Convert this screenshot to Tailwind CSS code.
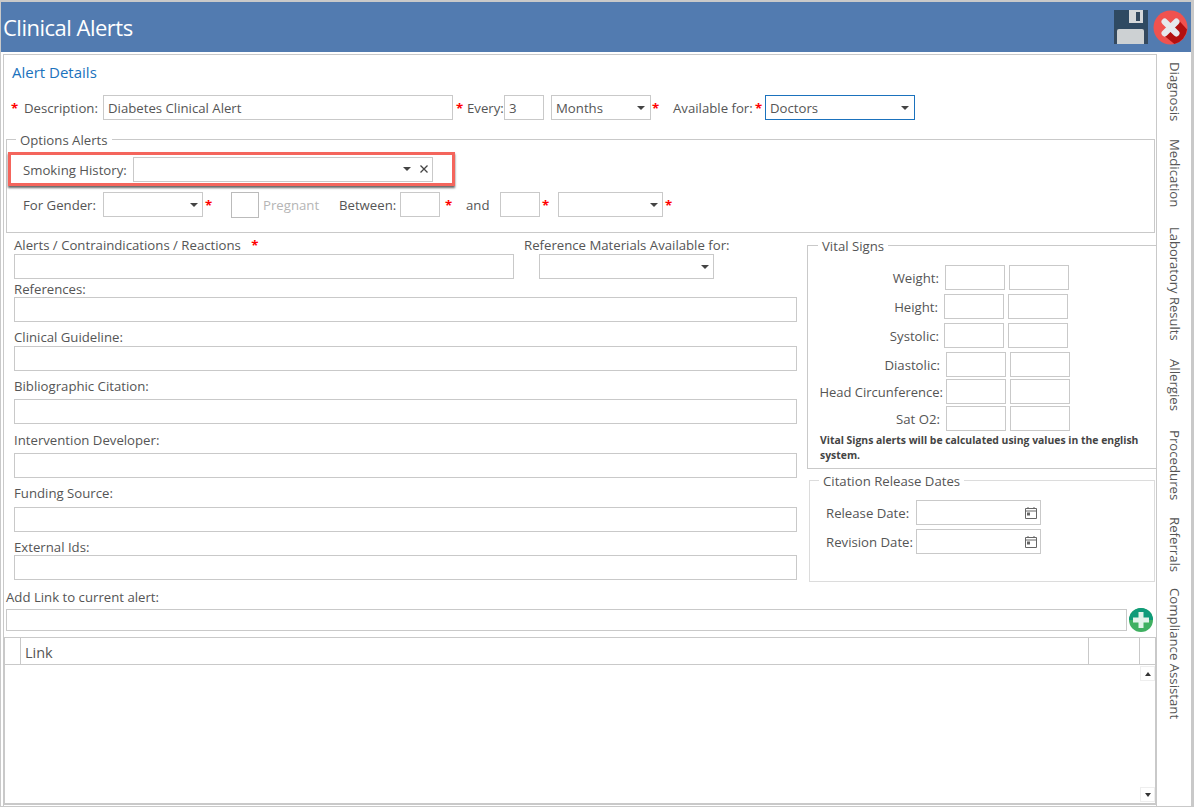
<!DOCTYPE html>
<html><head><meta charset="utf-8">
<script src="https://cdn.jsdelivr.net/npm/@tailwindcss/browser@4"></script>
</head>
<body class="bg-white">
<div class="w-[1194px] h-[807px] overflow-hidden flex flex-col bg-white border-t-2 border-r-[3px] border-l border-b border-[#c9c9c9] font-['Open_Sans',sans-serif] text-[13.2px] text-[#555]">
  <header class="h-[50px] shrink-0 bg-[#527bb0] flex items-center pl-[2px] pr-[3px]">
    <h1 class="text-[22px] text-white flex-1 tracking-[-0.5px]">Clinical Alerts</h1>
    <svg class="w-[34px] h-[34px]" viewBox="0 0 34 34"><rect width="34" height="34" fill="#34495e"/><rect width="34" height="19" fill="#2f4a62"/><rect x="15" y="0" width="14" height="13" fill="#d5d8da"/><rect x="22" y="2" width="4" height="9" fill="#34495e"/><path d="M3 21q0-2 2-2h23q2 0 2 2v13H3z" fill="#cdd1d3"/></svg>
    <svg class="w-[35px] h-[35px] ml-[5px]" viewBox="0 0 36 36"><circle cx="18" cy="18" r="17.500" fill="#f0524f"/><path d="M11 26 L26 10 L35 20 A17.500 17.500 0 0 1 22 35z" fill="#b3100f"/><path d="M12 12L24 24M24 12L12 24" stroke="#e6e9ed" stroke-width="6.500" stroke-linecap="round"/></svg>
  </header>
  <div class="flex flex-1 min-h-0 pt-[2px] pl-[2px]">
    <main class="w-[1154px] h-[753px] shrink-0 border border-[#c9c9c9]">
      <h2 class="text-[15px] text-[#1b72bd] leading-[20px] ml-[8px] mt-[7px]">Alert Details</h2>
      <!-- description row -->
      <div class="flex items-center h-[25px] mt-[13px] ml-[7px]">
        <span class="text-[#f00] w-[13px] font-bold pt-[2px]">*</span>
        <span class="w-[79px] pt-[2px]">Description:</span>
        <div class="w-[350px] h-[25px] border border-[#c9c9c9] px-[4px] leading-[25px]">Diabetes Clinical Alert</div>
        <span class="text-[#f00] font-bold ml-[3px] w-[11px] pt-[2px]">*</span>
        <span class="w-[37px] pt-[2px]">Every:</span>
        <div class="w-[40px] h-[25px] border border-[#c9c9c9] px-[4px] leading-[25px]">3</div>
        <div class="w-[100px] h-[25px] border border-[#c9c9c9] px-[4px] ml-[7px] flex justify-between items-center"><span class="pt-[2px]">Months</span><span class="w-0 h-0 border-x-4 border-x-transparent border-t-4 border-t-[#444] mr-[1px]"></span></div>
        <span class="text-[#f00] font-bold w-[22px] pl-[1px] pt-[2px]">*</span>
        <span class="w-[82px] pt-[2px]">Available for:</span>
        <span class="text-[#f00] font-bold w-[10px] pt-[2px]">*</span>
        <div class="w-[150px] h-[25px] border border-[#1b72bd] px-[4px] flex justify-between items-center"><span class="pt-[2px]">Doctors</span><span class="w-0 h-0 border-x-4 border-x-transparent border-t-4 border-t-[#444] mr-[1px]"></span></div>
      </div>
      <!-- options -->
      <section class="relative h-[94px] mt-[19px] ml-[2px] mr-[1px] border border-[#c9c9c9]">
        <span class="absolute -top-[9px] left-[9px] bg-white px-[4px] leading-[18px]">Options Alerts</span>
        <div class="mt-[12px] ml-[1px] w-[447px] h-[34px] border-[3px] border-[#f4655c] shadow-[0_2px_2px_#666] flex items-center pl-[12px]">
          <span class="w-[110px] pt-[4px]">Smoking History:</span>
          <div class="w-[300px] h-[25px] border border-[#c9c9c9] flex items-center justify-end pr-[4px] gap-[9px]"><span class="w-0 h-0 border-x-4 border-x-transparent border-t-4 border-t-[#444]"></span><svg class="w-[8px] h-[8px]" viewBox="0 0 8 8"><path d="M.5.5l7 7M7.500.5l-7 7" stroke="#444" stroke-width="1.300"/></svg></div>
        </div>
        <div class="flex items-center h-[25px] mt-[6px] ml-[16px]">
          <span class="w-[80px] pt-[2px]">For Gender:</span>
          <div class="w-[100px] h-[25px] border border-[#c9c9c9] flex items-center justify-end pr-[4px]"><span class="w-0 h-0 border-x-4 border-x-transparent border-t-4 border-t-[#444]"></span></div>
          <span class="text-[#f00] font-bold ml-[2px] w-[26px] pt-[2px]">*</span>
          <div class="w-[28px] h-[26px] border border-[#bbb]"></div>
          <span class="text-[#b5b5b5] ml-[4px] w-[76px] pt-[2px]">Pregnant</span>
          <span class="w-[61px] pt-[2px]">Between:</span>
          <div class="w-[40px] h-[25px] border border-[#c9c9c9]"></div>
          <span class="text-[#f00] font-bold ml-[5px] w-[21px] pt-[2px]">*</span>
          <span class="w-[34px] pt-[2px]">and</span>
          <div class="w-[40px] h-[25px] border border-[#c9c9c9]"></div>
          <span class="text-[#f00] font-bold ml-[2px] w-[16px] pt-[2px]">*</span>
          <div class="w-[105px] h-[25px] border border-[#c9c9c9] flex items-center justify-end pr-[4px]"><span class="w-0 h-0 border-x-4 border-x-transparent border-t-4 border-t-[#444]"></span></div>
          <span class="text-[#f00] font-bold ml-[2px] pt-[2px]">*</span>
        </div>
      </section>
      <!-- lower -->
      <div class="flex h-[352px] mt-[3px]">
        <div class="w-[803px] pl-[10px] shrink-0">
          <div class="flex items-start h-[44px]">
            <div class="w-[510px]">
              <div class="h-[18px] leading-[18px]">Alerts / Contraindications / Reactions <span class="text-[#f00] font-bold ml-[7px]">*</span></div>
              <div class="w-[500px] h-[25px] border border-[#c9c9c9]"></div>
            </div>
            <div>
              <div class="h-[18px] leading-[18px]">Reference Materials Available for:</div>
              <div class="w-[175px] h-[25px] border border-[#c9c9c9] ml-[15px] flex items-center justify-end pr-[4px]"><span class="w-0 h-0 border-x-4 border-x-transparent border-t-4 border-t-[#444]"></span></div>
            </div>
          </div>
          <div class="leading-[18px] h-[17px]">References:</div>
          <div class="w-[783px] h-[25px] border border-[#c9c9c9]"></div>
          <div class="leading-[18px] h-[18px] mt-[6px]">Clinical Guideline:</div>
          <div class="w-[783px] h-[25px] border border-[#c9c9c9]"></div>
          <div class="leading-[18px] h-[18px] mt-[6px]">Bibliographic Citation:</div>
          <div class="w-[783px] h-[25px] border border-[#c9c9c9] mt-[4px]"></div>
          <div class="leading-[18px] h-[18px] mt-[7px]">Intervention Developer:</div>
          <div class="w-[783px] h-[25px] border border-[#c9c9c9] mt-[4px]"></div>
          <div class="leading-[18px] h-[18px] mt-[6px]">Funding Source:</div>
          <div class="w-[783px] h-[25px] border border-[#c9c9c9] mt-[5px]"></div>
          <div class="leading-[18px] h-[18px] mt-[6px]">External Ids:</div>
          <div class="w-[783px] h-[25px] border border-[#c9c9c9] -mt-[1px]"></div>
        </div>
        <div class="flex-1 min-w-0 pt-[9px]">
          <section class="relative h-[224px] border-l border-b border-t border-[#c9c9c9]">
            <span class="absolute -top-[9px] left-[10px] bg-white px-[4px] leading-[18px]">Vital Signs</span>
            <div class="grid grid-cols-[131px_60px_60px] gap-x-[4px] pt-[19px] items-center justify-start text-right">
              <span class="h-[25px] leading-[27px]">Weight:</span><div class="w-[60px] h-[25px] border border-[#c9c9c9] ml-[2px]"></div><div class="w-[60px] h-[25px] border border-[#c9c9c9] ml-[2px]"></div>
            </div>
            <div class="grid grid-cols-[131px_60px_60px] gap-x-[4px] mt-[4px] items-center justify-start text-right">
              <span class="h-[25px] leading-[27px] mr-[1px]">Height:</span><div class="w-[60px] h-[25px] border border-[#c9c9c9] ml-[1px]"></div><div class="w-[60px] h-[25px] border border-[#c9c9c9] ml-[1px]"></div>
            </div>
            <div class="grid grid-cols-[131px_60px_60px] gap-x-[4px] mt-[4px] items-center justify-start text-right">
              <span class="h-[25px] leading-[27px]">Systolic:</span><div class="w-[60px] h-[25px] border border-[#c9c9c9] ml-[1px]"></div><div class="w-[60px] h-[25px] border border-[#c9c9c9] ml-[1px]"></div>
            </div>
            <div class="grid grid-cols-[131px_60px_60px] gap-x-[4px] mt-[4px] items-center justify-start text-right">
              <span class="h-[25px] leading-[27px] -mr-[1px]">Diastolic:</span><div class="w-[60px] h-[25px] border border-[#c9c9c9] ml-[3px]"></div><div class="w-[60px] h-[25px] border border-[#c9c9c9] ml-[3px]"></div>
            </div>
            <div class="grid grid-cols-[131px_60px_60px] gap-x-[4px] mt-[2px] items-center justify-start text-right">
              <span class="h-[25px] leading-[27px] whitespace-nowrap -mr-[4px] text-[13px]">Head Circunference:</span><div class="w-[60px] h-[25px] border border-[#c9c9c9] ml-[3px]"></div><div class="w-[60px] h-[25px] border border-[#c9c9c9] ml-[3px]"></div>
            </div>
            <div class="grid grid-cols-[131px_60px_60px] gap-x-[4px] mt-[2px] items-center justify-start text-right">
              <span class="h-[25px] leading-[27px] -mr-[1px]">Sat O2:</span><div class="w-[60px] h-[25px] border border-[#c9c9c9] ml-[3px]"></div><div class="w-[60px] h-[25px] border border-[#c9c9c9] ml-[3px]"></div>
            </div>
            <p class="text-[10.4px] font-bold leading-[15px] pl-[12px] pr-[14px] mt-[2px] text-[#444]">Vital Signs alerts will be calculated using values in the english system.</p>
          </section>
          <section class="relative h-[102px] mt-[11px] ml-[2px] mr-[1px] border border-[#dcdcdc]">
            <span class="absolute -top-[9px] left-[9px] bg-white px-[4px] leading-[18px]">Citation Release Dates</span>
            <div class="flex items-center mt-[19px] ml-[16px]">
              <span class="w-[90px] pt-[2px]">Release Date:</span>
              <div class="w-[125px] h-[25px] border border-[#c9c9c9] flex items-center justify-end pr-[2px]"><svg class="w-[14px] h-[14px]" viewBox="0 0 14 14" fill="none" stroke="#666"><path d="M1.500 2.500h11v10h-11zM1.500 5h11M4 1v2M10 1v2"/><rect x="3.500" y="7" width="2" height="2"/></svg></div>
            </div>
            <div class="flex items-center mt-[4px] ml-[16px]">
              <span class="w-[90px] pt-[2px]">Revision Date:</span>
              <div class="w-[125px] h-[25px] border border-[#c9c9c9] flex items-center justify-end pr-[2px]"><svg class="w-[14px] h-[14px]" viewBox="0 0 14 14" fill="none" stroke="#666"><path d="M1.500 2.500h11v10h-11zM1.500 5h11M4 1v2M10 1v2"/><rect x="3.500" y="7" width="2" height="2"/></svg></div>
            </div>
          </section>
        </div>
      </div>
      <div class="ml-[2px] leading-[18px] h-[18px]">Add Link to current alert:</div>
      <div class="flex items-center ml-[2px] mt-[3px] h-[22px]">
        <div class="w-[1121px] h-[22px] border border-[#c9c9c9] shrink-0"></div>
        <svg class="w-[24px] h-[24px] ml-[2px] shrink-0" viewBox="0 0 24 24"><circle cx="12" cy="12" r="12" fill="#3fb061"/><path d="M0 12a12 12 0 0 1 24 0z" fill="#0f9b7a"/><path d="M9.500 4h5v5.500H20v5h-5.500V20h-5v-5.500H4v-5h5.500z" fill="#e3f3ea"/></svg>
      </div>
      <div class="h-[168px] mt-[6px] border-x border-t border-b-2 border-[#c9c9c9] flex flex-col">
        <div class="flex h-[27px] border-b border-[#c9c9c9] shrink-0">
          <div class="w-[16px] border-r border-[#c9c9c9]"></div>
          <div class="flex-1 border-r border-[#c9c9c9] pl-[4px] text-[14.5px] leading-[29px]">Link</div>
          <div class="w-[51px] border-r border-[#c9c9c9]"></div>
          <div class="w-[15px]"></div>
        </div>
        <div class="flex-1 flex flex-col justify-between items-end py-[1px]">
          <div class="w-[15px] h-[15px] border border-[#eee] flex items-center justify-center"><span class="w-0 h-0 border-x-[3px] border-x-transparent border-b-[4px] border-b-[#333]"></span></div>
          <div class="w-[15px] h-[15px] border border-[#eee] flex items-center justify-center"><span class="w-0 h-0 border-x-[3px] border-x-transparent border-t-[4px] border-t-[#333]"></span></div>
        </div>
      </div>
    </main>
    <nav class="flex-1 flex flex-col items-center pt-[8px] text-[13.2px] text-[#555] leading-none whitespace-nowrap">
      <span class="[writing-mode:vertical-rl] h-[58px]">Diagnosis</span>
      <span class="[writing-mode:vertical-rl] h-[68px] mt-[19px]">Medication</span>
      <span class="[writing-mode:vertical-rl] h-[113px] mt-[20px] text-[13px]">Laboratory Results</span>
      <span class="[writing-mode:vertical-rl] h-[53px] mt-[19px]">Allergies</span>
      <span class="[writing-mode:vertical-rl] h-[69px] mt-[18px]">Procedures</span>
      <span class="[writing-mode:vertical-rl] h-[53px] mt-[18px]">Referrals</span>
      <span class="[writing-mode:vertical-rl] h-[131px] mt-[18px]">Compliance Assistant</span>
    </nav>
  </div>
</div>
</body></html>
